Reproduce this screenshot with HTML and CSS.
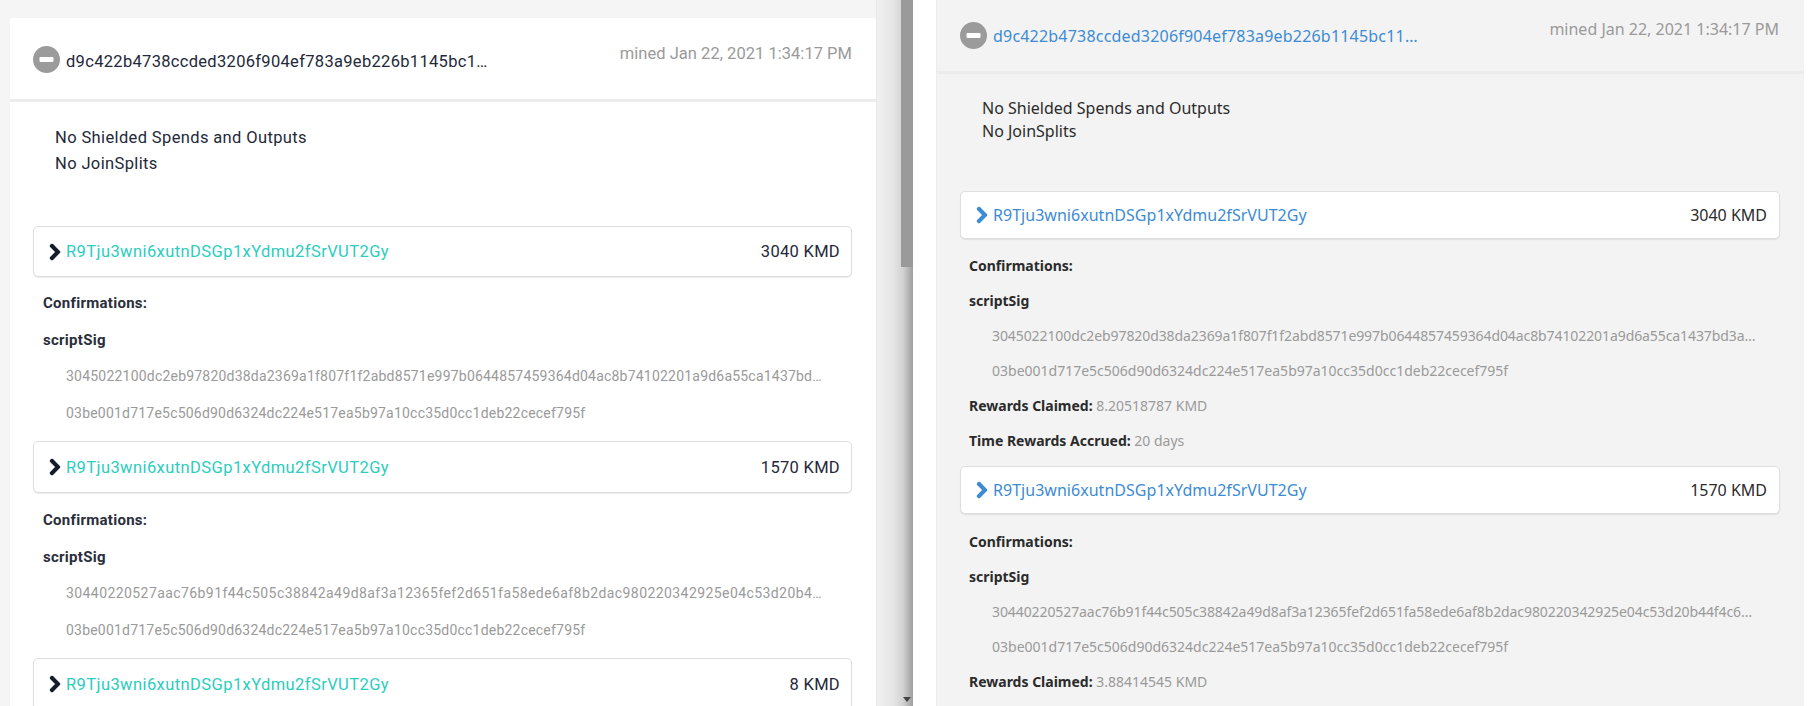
FILE: index.html
```html
<!DOCTYPE html>
<html lang="en">
<head>
<meta charset="utf-8">
<title>Transactions</title>
<link rel="stylesheet" href="styles.css">
</head>
<body>
<div class="page">
  <section class="pane pane-a">
    <article class="card">
      <header class="card-head">
        <div class="head-main">
          <svg class="minus" viewBox="0 0 27 27"><circle cx="13.5" cy="13.5" r="13.5"/><rect x="6.5" y="11" width="14" height="5" rx="1"/></svg>
          <span class="txid">d9c422b4738ccded3206f904ef783a9eb226b1145bc1…</span>
        </div>
        <span class="mined">mined Jan 22, 2021 1:34:17 PM</span>
      </header>
      <div class="notes"><div>No Shielded Spends and Outputs</div><div>No JoinSplits</div></div>
      <div class="flow">
        <div class="addr-box"><span class="addr"><svg class="chev" viewBox="0 0 320 512"><path d="M285.476 272.971L91.132 467.314c-9.373 9.373-24.569 9.373-33.941 0l-22.667-22.667c-9.357-9.357-9.375-24.522-.04-33.901L188.505 256 34.484 101.255c-9.335-9.379-9.317-24.544.04-33.901l22.667-22.667c9.373-9.373 24.569-9.373 33.941 0L285.475 239.03c9.373 9.372 9.373 24.568.001 33.941z"/></svg><span class="addr-text">R9Tju3wni6xutnDSGp1xYdmu2fSrVUT2Gy</span></span><span class="amount">3040 KMD</span></div>
        <div class="row"><b>Confirmations:</b></div>
        <div class="row"><b>scriptSig</b></div>
        <div class="hash">3045022100dc2eb97820d38da2369a1f807f1f2abd8571e997b0644857459364d04ac8b74102201a9d6a55ca1437bd…</div>
        <div class="hash">03be001d717e5c506d90d6324dc224e517ea5b97a10cc35d0cc1deb22cecef795f</div>
        <div class="addr-box"><span class="addr"><svg class="chev" viewBox="0 0 320 512"><path d="M285.476 272.971L91.132 467.314c-9.373 9.373-24.569 9.373-33.941 0l-22.667-22.667c-9.357-9.357-9.375-24.522-.04-33.901L188.505 256 34.484 101.255c-9.335-9.379-9.317-24.544.04-33.901l22.667-22.667c9.373-9.373 24.569-9.373 33.941 0L285.475 239.03c9.373 9.372 9.373 24.568.001 33.941z"/></svg><span class="addr-text">R9Tju3wni6xutnDSGp1xYdmu2fSrVUT2Gy</span></span><span class="amount">1570 KMD</span></div>
        <div class="row"><b>Confirmations:</b></div>
        <div class="row"><b>scriptSig</b></div>
        <div class="hash hash-wide">30440220527aac76b91f44c505c38842a49d8af3a12365fef2d651fa58ede6af8b2dac980220342925e04c53d20b4…</div>
        <div class="hash">03be001d717e5c506d90d6324dc224e517ea5b97a10cc35d0cc1deb22cecef795f</div>
        <div class="addr-box"><span class="addr"><svg class="chev" viewBox="0 0 320 512"><path d="M285.476 272.971L91.132 467.314c-9.373 9.373-24.569 9.373-33.941 0l-22.667-22.667c-9.357-9.357-9.375-24.522-.04-33.901L188.505 256 34.484 101.255c-9.335-9.379-9.317-24.544.04-33.901l22.667-22.667c9.373-9.373 24.569-9.373 33.941 0L285.475 239.03c9.373 9.372 9.373 24.568.001 33.941z"/></svg><span class="addr-text">R9Tju3wni6xutnDSGp1xYdmu2fSrVUT2Gy</span></span><span class="amount">8 KMD</span></div>
      </div>
    </article>
    <div class="gutter"><div class="track"><div class="thumb"></div><svg class="arrow" viewBox="0 0 8 5"><path d="M0 0H8L4 5Z"/></svg></div></div>
  </section>
  <section class="pane pane-b">
    <article class="card">
      <header class="card-head">
        <div class="head-main">
          <svg class="minus" viewBox="0 0 27 27"><circle cx="13.5" cy="13.5" r="13.5"/><rect x="6.5" y="11" width="14" height="5" rx="1"/></svg>
          <span class="txid">d9c422b4738ccded3206f904ef783a9eb226b1145bc11…</span>
        </div>
        <span class="mined">mined Jan 22, 2021 1:34:17 PM</span>
      </header>
      <div class="notes"><div>No Shielded Spends and Outputs</div><div>No JoinSplits</div></div>
      <div class="flow">
        <div class="addr-box"><span class="addr"><svg class="chev" viewBox="0 0 320 512"><path d="M285.476 272.971L91.132 467.314c-9.373 9.373-24.569 9.373-33.941 0l-22.667-22.667c-9.357-9.357-9.375-24.522-.04-33.901L188.505 256 34.484 101.255c-9.335-9.379-9.317-24.544.04-33.901l22.667-22.667c9.373-9.373 24.569-9.373 33.941 0L285.475 239.03c9.373 9.372 9.373 24.568.001 33.941z"/></svg><span class="addr-text">R9Tju3wni6xutnDSGp1xYdmu2fSrVUT2Gy</span></span><span class="amount">3040 KMD</span></div>
        <div class="row"><b>Confirmations:</b></div>
        <div class="row"><b>scriptSig</b></div>
        <div class="hash hash-long">3045022100dc2eb97820d38da2369a1f807f1f2abd8571e997b0644857459364d04ac8b74102201a9d6a55ca1437bd3a…</div>
        <div class="hash">03be001d717e5c506d90d6324dc224e517ea5b97a10cc35d0cc1deb22cecef795f</div>
        <div class="row"><b>Rewards Claimed:</b> <span class="dim">8.20518787 KMD</span></div>
        <div class="row"><b>Time Rewards Accrued:</b> <span class="dim">20 days</span></div>
        <div class="addr-box"><span class="addr"><svg class="chev" viewBox="0 0 320 512"><path d="M285.476 272.971L91.132 467.314c-9.373 9.373-24.569 9.373-33.941 0l-22.667-22.667c-9.357-9.357-9.375-24.522-.04-33.901L188.505 256 34.484 101.255c-9.335-9.379-9.317-24.544.04-33.901l22.667-22.667c9.373-9.373 24.569-9.373 33.941 0L285.475 239.03c9.373 9.372 9.373 24.568.001 33.941z"/></svg><span class="addr-text">R9Tju3wni6xutnDSGp1xYdmu2fSrVUT2Gy</span></span><span class="amount">1570 KMD</span></div>
        <div class="row"><b>Confirmations:</b></div>
        <div class="row"><b>scriptSig</b></div>
        <div class="hash hash-long">30440220527aac76b91f44c505c38842a49d8af3a12365fef2d651fa58ede6af8b2dac980220342925e04c53d20b44f4c6…</div>
        <div class="hash">03be001d717e5c506d90d6324dc224e517ea5b97a10cc35d0cc1deb22cecef795f</div>
        <div class="row"><b>Rewards Claimed:</b> <span class="dim">3.88414545 KMD</span></div>
      </div>
    </article>
  </section>
</div>
</body>
</html>
```

FILE: styles.css
```css
html, body { margin: 0; height: 100%; overflow: hidden; background: #fff; }
.page { display: flex; height: 706px; overflow: hidden; }
.pane { box-sizing: border-box; height: 706px; overflow: hidden; }
b { font-weight: 700; }

/* left pane */
.pane-a { width: 913px; flex: none; display: flex; background: #f5f5f5; padding-left: 10px; font-family: Roboto, "Liberation Sans", sans-serif; color: #23283a; }
.pane-a .card { width: 866px; flex: none; margin-top: 18px; background: #fff; border-radius: 3px 3px 0 0; }
.pane-a .card-head { height: 81px; border-bottom: 3px solid #ececec; padding: 0 24px 0 23px; display: flex; justify-content: space-between; }
.pane-a .head-main { padding-top: 28px; display: flex; align-items: flex-start; gap: 6px; }
.pane-a .txid { font-size: 16.5px; line-height: 27px; padding-top: 2px; letter-spacing: .31px; color: #23283a; }
.pane-a .mined { font-size: 16.5px; line-height: 24px; padding-top: 24px; color: #9a9a9a; letter-spacing: .03px; }
.pane-a .notes { padding: 23px 0 0 45px; height: 101px; font-size: 16.5px; line-height: 26px; letter-spacing: .37px; }
.pane-a .flow { padding: 0 24px 0 23px; }
.pane-a .addr-box { height: 52px; padding: 0 11px 0 15px; background: #fff; font-size: 16.5px; }
.pane-a .addr-box:first-child { height: 51px; }
.pane-a .addr-text { color: #2bcdbd; letter-spacing: .42px; }
.pane-a .addr .chev { fill: #141c2e; stroke: #141c2e; }
.pane-a .amount { letter-spacing: .3px; }
.pane-a .row { height: 36.7px; line-height: 36.7px; padding-left: 10px; font-size: 15px; letter-spacing: .28px; color: #2a2e3a; }
.pane-a .addr-box + .row { margin-top: 8.6px; }
.pane-a .addr-box:first-child + .row { margin-top: 8px; }
.pane-a .hash { height: 36.7px; line-height: 36.7px; padding-left: 33px; font-size: 14px; letter-spacing: .21px; color: #9a9a9a; }
.pane-a .hash-wide { letter-spacing: .42px; }
.pane-a .hash + .addr-box { margin-top: 9.5px; }

/* right pane */
.pane-b { width: 868px; flex: none; margin-left: 23px; background: #f3f3f3; border-left: 1px solid #ececec; font-family: "Noto Sans", "Liberation Sans", sans-serif; color: #2b2b2b; }
.pane-b .card-head { height: 71px; border-bottom: 3px solid #ececec; padding: 0 25px 0 23px; display: flex; justify-content: space-between; }
.pane-b .head-main { padding-top: 22px; display: flex; align-items: flex-start; gap: 6px; }
.pane-b .txid { font-size: 16px; line-height: 27px; padding-top: 1px; letter-spacing: .2px; color: #3d8bd3; }
.pane-b .mined { font-size: 16px; line-height: 24px; padding-top: 17px; color: #9a9a9a; }
.pane-b .notes { padding: 23px 0 0 45px; height: 94px; font-size: 16px; line-height: 23px; }
.pane-b .flow { padding: 0 24px 0 23px; }
.pane-b .addr-box { height: 48px; padding: 0 12px 0 15px; background: #fff; }
.pane-b .addr-text { color: #3d8bd3; letter-spacing: .03px; }
.pane-b .addr .chev { fill: #3d8bd3; stroke: #3d8bd3; }
.pane-b .row { height: 35px; line-height: 35px; padding-left: 9px; font-size: 14px; }
.pane-b .addr-box + .row { margin-top: 9px; }
.pane-b .hash { height: 35px; line-height: 35px; padding-left: 32px; font-size: 14px; color: #9a9a9a; }
.pane-b .hash-long { letter-spacing: -.09px; }
.pane-b .row + .addr-box { margin-top: 8px; }
.pane-b .row + .addr-box + .row { margin-top: 10px; }

/* shared */
.minus { width: 27px; height: 27px; flex: none; }
.minus circle { fill: #9b9b9b; }
.minus rect { fill: #fff; }
.addr-box { box-sizing: border-box; display: flex; justify-content: space-between; align-items: center; border: 1px solid #dedede; border-radius: 5px; box-shadow: 0 1px 1px rgba(0,0,0,.08); font-size: 16px; white-space: nowrap; }
.addr { display: flex; align-items: center; gap: 5px; }
.chev { width: 12px; height: 18px; flex: none; stroke-width: 36; stroke-linejoin: round; overflow: visible; }
.hash, .row, .mined, .txid { white-space: nowrap; }
.dim { color: #9a9a9a; font-weight: 400; }

/* scrollbar */
.gutter { flex: 1; display: flex; justify-content: flex-end; border-left: 1px solid #e8e8e8; background: linear-gradient(90deg, #f0f0f0 0, #e6e6e6 45%, #d2d2d2 72%, #9e9e9e 100%); }
.track { width: 12px; position: relative; }
.thumb { height: 267px; background: #9a9a9a; }
.arrow { position: absolute; left: 2px; bottom: 4px; width: 8px; height: 5px; fill: #444; }
```
